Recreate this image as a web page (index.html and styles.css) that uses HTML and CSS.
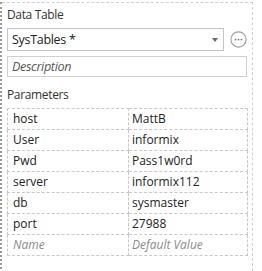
FILE: index.html
```html
<!DOCTYPE html>
<html lang="en">
<head>
    <meta charset="UTF-8">
    <title>Data Table</title>
    <link rel="stylesheet" href="styles.css">
</head>
<body>
    <div class="frame">
        <div class="panel">
            <div class="label">Data Table</div>
            <div class="table-row">
                <div class="select">
                    <span>SysTables *</span>
                    <span class="arrow"></span>
                </div>
                <div class="more">
                    <svg width="17" height="17" viewBox="0 0 17 17">
                        <circle cx="8.5" cy="8.5" r="7.6" fill="none" stroke="#9c9c9c" stroke-width="1.1"/>
                        <circle cx="5.6" cy="8.6" r="0.95" fill="#7e7e7e"/>
                        <circle cx="8.5" cy="8.6" r="0.95" fill="#7e7e7e"/>
                        <circle cx="11.4" cy="8.6" r="0.95" fill="#7e7e7e"/>
                    </svg>
                </div>
            </div>
            <div class="input placeholder">Description</div>

            <div class="label params-label">Parameters</div>
            <table class="params">
                <tr><td>host</td><td>MattB</td></tr>
                <tr><td>User</td><td>informix</td></tr>
                <tr><td>Pwd</td><td>Pass1w0rd</td></tr>
                <tr><td>server</td><td>informix112</td></tr>
                <tr><td>db</td><td>sysmaster</td></tr>
                <tr><td>port</td><td>27988</td></tr>
                <tr class="new"><td>Name</td><td>Default Value</td></tr>
            </table>
        </div>
    </div>
</body>
</html>
```

FILE: styles.css
```css
html, body { margin: 0; padding: 0; background: #fff; }
body { font-family: 'Open Sans', 'Noto Sans', sans-serif; font-size: 12px; color: #333; }

.frame { height: 271px; border-left: 2px dotted #9a9a9a; box-sizing: border-box; }
.panel {
    width: 251px;
    height: 269px;
    margin-top: 2px;
    padding: 4px 5px 0 5px;
    border-top: 1px dashed #d0d0d0;
    border-right: 1px dashed #d0d0d0;
    box-sizing: border-box;
}

.label { line-height: 16px; color: #333; letter-spacing: -0.35px; }
.params-label { margin-top: 10px; }

.table-row { display: flex; align-items: center; margin-top: 5px; }
.select {
    width: 217px;
    height: 23px;
    border: 1px solid #c4c4c4;
    box-sizing: border-box;
    display: flex;
    align-items: center;
    justify-content: space-between;
    padding: 0 5px 0 4px;
    font-size: 12.5px;
    letter-spacing: -0.3px;
    color: #222;
}
.arrow {
    width: 0; height: 0;
    border-left: 3.5px solid transparent;
    border-right: 3.5px solid transparent;
    border-top: 4px solid #6a6a6a;
    margin-top: 1px;
}
.more { margin-left: 6px; height: 17px; }
.more svg { display: block; }

.input {
    margin-top: 5px;
    height: 21px;
    line-height: 19px;
    border: 1px solid #cfcfcf;
    box-sizing: border-box;
    padding: 0 4px;
    font-size: 12.5px;
    letter-spacing: -0.3px;
}
.placeholder { font-style: italic; color: #555; }

.params {
    margin-top: 5px;
    width: 241px;
    border-collapse: collapse;
    table-layout: fixed;
}
.params td {
    width: 50%;
    height: 20px;
    padding: 0 0 0 5px;
    border: 1px dashed #c8c8c8;
    color: #222;
    line-height: 18px;
    white-space: nowrap;
    overflow: hidden;
}
.params td + td { padding-left: 3px; }
.params tr.new td { font-style: italic; color: #8a8a8a; }
```
